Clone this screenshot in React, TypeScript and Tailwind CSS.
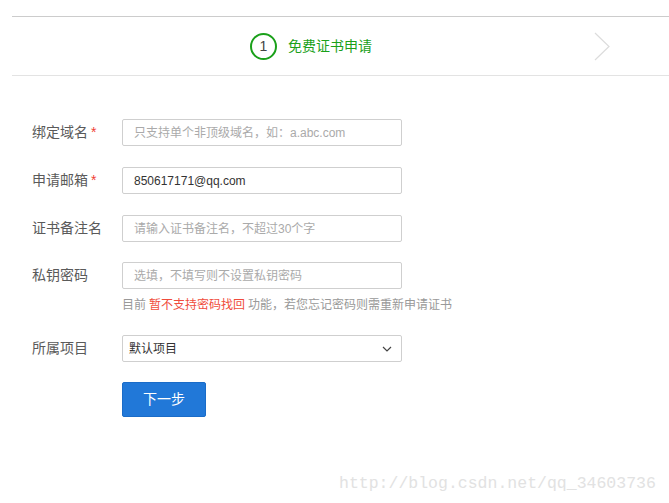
import React from "react";

const font = { fontFamily: '"Liberation Sans", "Noto Sans CJK SC", sans-serif' };

function Label({ text, required }: { text: string; required?: boolean }) {
  return (
    <div className="w-[90px] shrink-0 flex items-center text-[14px] text-[#5a5a5a]">
      <span>{text}</span>
      {required && <span className="ml-[3px] text-[#f04134]">*</span>}
    </div>
  );
}

function Input({ placeholder, value }: { placeholder?: string; value?: string }) {
  return (
    <div className="w-[280px] h-[27px] border border-[#cfcfcf] rounded-[2px] flex items-center pl-[11px] text-[12px]">
      {value ? (
        <span className="text-[#333]">{value}</span>
      ) : (
        <span className="text-[#aaa]">{placeholder}</span>
      )}
    </div>
  );
}

export default function App() {
  return (
    <div className="w-[669px] h-[503px] bg-white relative overflow-hidden" style={font}>
      <div className="pt-[16px] pl-[12px]">
        <div className="h-[60px] border-t border-b border-t-[#cccccc] border-b-[#e3e3e3] flex items-center relative">
          <div className="ml-[238px] w-[27px] h-[27px] rounded-full border-2 border-[#1aa01a] flex items-center justify-center text-[14px] text-[#444] leading-none">
            1
          </div>
          <span className="ml-[11px] text-[14px] text-[#1aa01a]">免费证书申请</span>
          <svg className="absolute left-[582px] top-[15px]" width="18" height="30" viewBox="0 0 18 30">
            <path d="M1 1 L15 14.5 L1 28" fill="none" stroke="#dcdcdc" strokeWidth="1.2" />
          </svg>
        </div>
      </div>

      <div className="pl-[32px] pt-[43px] flex flex-col">
        <div className="flex items-center h-[27px]">
          <Label text="绑定域名" required />
          <Input placeholder="只支持单个非顶级域名，如：a.abc.com" />
        </div>
        <div className="flex items-center h-[27px] mt-[21px]">
          <Label text="申请邮箱" required />
          <Input value="850617171@qq.com" />
        </div>
        <div className="flex items-center h-[27px] mt-[21px]">
          <Label text="证书备注名" />
          <Input placeholder="请输入证书备注名，不超过30个字" />
        </div>
        <div className="flex items-center h-[27px] mt-[20px]">
          <Label text="私钥密码" />
          <Input placeholder="选填，不填写则不设置私钥密码" />
        </div>
        <div className="ml-[90px] mt-[7px] h-[18px] flex items-center text-[12px] text-[#999]">
          <span>目前 </span>
          <span className="text-[#f04c3c] mx-[3px]">暂不支持密码找回</span>
          <span> 功能，若您忘记密码则需重新申请证书</span>
        </div>
        <div className="flex items-center h-[27px] mt-[21px]">
          <Label text="所属项目" />
          <div className="w-[280px] h-[27px] border border-[#cfcfcf] rounded-[2px] flex items-center justify-between pl-[6px] pr-[9px] text-[12px] text-[#333]">
            <span>默认项目</span>
            <svg width="10" height="6" viewBox="0 0 10 6">
              <path d="M1 1 L5 5 L9 1" fill="none" stroke="#444" strokeWidth="1.2" />
            </svg>
          </div>
        </div>
        <div className="ml-[90px] mt-[20px]">
          <button className="w-[84px] h-[35px] bg-[#2178d8] border border-[#1a6cc8] rounded-[2px] text-white text-[14px]">
            下一步
          </button>
        </div>
      </div>

      <div
        className="absolute left-[339px] top-[474px] text-[16.5px] text-[#e2e2e2] leading-[20px]"
        style={{ fontFamily: '"Liberation Mono", monospace' }}
      >
        http://blog.csdn.net/qq_34603736
      </div>
    </div>
  );
}
